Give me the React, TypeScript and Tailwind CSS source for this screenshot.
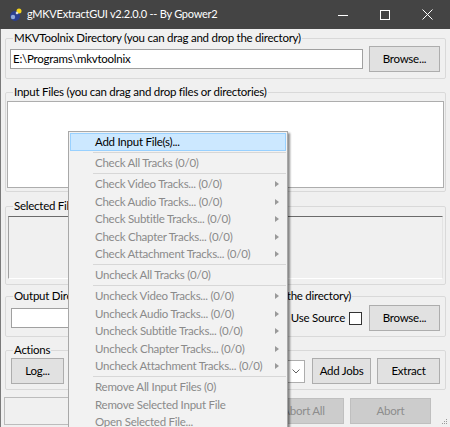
const font = { fontFamily: 'Lato, "Noto Sans", "Liberation Sans", sans-serif' };

type Item = { label: string; sub?: boolean; enabled?: boolean; hot?: boolean } | "sep";

const menu: Item[] = [
  { label: "Add Input File(s)...", enabled: true, hot: true },
  "sep",
  { label: "Check All Tracks (0/0)" },
  "sep",
  { label: "Check Video Tracks... (0/0)", sub: true },
  { label: "Check Audio Tracks... (0/0)", sub: true },
  { label: "Check Subtitle Tracks... (0/0)", sub: true },
  { label: "Check Chapter Tracks... (0/0)", sub: true },
  { label: "Check Attachment Tracks... (0/0)", sub: true },
  "sep",
  { label: "Uncheck All Tracks (0/0)" },
  "sep",
  { label: "Uncheck Video Tracks... (0/0)", sub: true },
  { label: "Uncheck Audio Tracks... (0/0)", sub: true },
  { label: "Uncheck Subtitle Tracks... (0/0)", sub: true },
  { label: "Uncheck Chapter Tracks... (0/0)", sub: true },
  { label: "Uncheck Attachment Tracks... (0/0)", sub: true },
  "sep",
  { label: "Remove All Input Files (0)" },
  { label: "Remove Selected Input File" },
  { label: "Open Selected File..." },
];

function Group({ label, className, children }: { label: string; className?: string; children?: React.ReactNode }) {
  return (
    <fieldset className={"mx-[4px] rounded-[2px] border border-[#d9d9d9] " + (className ?? "")}>
      <legend className="ml-[7px] px-[1px] text-[11.5px] leading-[14px] tracking-[-0.25px] text-black">{label}</legend>
      {children}
    </fieldset>
  );
}

function Button({ label, className }: { label: string; className?: string }) {
  return (
    <div
      className={
        "flex items-center justify-center border border-[#adadad] bg-[#e1e1e1] text-[11.5px] tracking-[-0.25px] text-black " +
        (className ?? "")
      }
    >
      {label}
    </div>
  );
}

function ContextMenu() {
  return (
    <div className="absolute left-[68px] top-[131px] w-[220px] border border-[#a8a8a8] bg-[#f2f2f2] py-[1px] shadow-[2px_2px_2px_rgba(0,0,0,0.45)]">
      {menu.map((item, i) =>
        item === "sep" ? (
          <div key={i} className="flex h-[3.5px] items-center pl-[24px] pr-[1px]">
            <div className="h-px w-full bg-[#d7d7d7]" />
          </div>
        ) : (
          <div
            key={i}
            className={
              "relative mx-[1px] flex h-[17.5px] items-center pl-[24px] text-[11.5px] tracking-[-0.25px] " +
              (item.hot ? "border border-[#99d1ff] bg-[#cce8ff] " : "border border-transparent ") +
              (item.enabled ? "text-black" : "text-[#8a8a8a]")
            }
          >
            {item.label}
            {item.sub && (
              <svg className="absolute right-[6px] top-[5px]" width="4" height="6" viewBox="0 0 4 6">
                <path d="M0 0L4 3L0 6Z" fill="#9a9a9a" />
              </svg>
            )}
          </div>
        )
      )}
    </div>
  );
}

export default function App() {
  return (
    <div className="relative h-[427px] w-[450px] overflow-hidden bg-[#f0f0f0]" style={font}>
      {/* title bar */}
      <div className="flex h-[29px] items-center bg-[#444444] text-white">
        <svg className="ml-[8px]" width="15" height="15" viewBox="0 0 15 15">
          <circle cx="7" cy="9" r="5" fill="#2b3e8f" />
          <circle cx="5" cy="10" r="2.2" fill="#8fa6d8" />
          <circle cx="11" cy="4" r="2.5" fill="#f3d21a" />
          <circle cx="9" cy="6" r="1.3" fill="#dadada" />
        </svg>
        <span className="ml-[4px] text-[11px] tracking-[-0.25px]">gMKVExtractGUI v2.2.0.0 -- By Gpower2</span>
        <div className="ml-auto flex h-full pr-[2px]">
          <div className="flex w-[42px] items-center justify-center">
            <svg width="10" height="10" viewBox="0 0 10 10">
              <path d="M0 5.5H10" stroke="#fff" strokeWidth="1" />
            </svg>
          </div>
          <div className="flex w-[42px] items-center justify-center">
            <svg width="10" height="10" viewBox="0 0 10 10">
              <rect x="0.5" y="0.5" width="9" height="9" fill="none" stroke="#fff" strokeWidth="1" />
            </svg>
          </div>
          <div className="flex w-[42px] items-center justify-center">
            <svg width="11" height="11" viewBox="0 0 11 11">
              <path d="M0.5 0.5L10.5 10.5M10.5 0.5L0.5 10.5" stroke="#fff" strokeWidth="1" />
            </svg>
          </div>
        </div>
      </div>

      <div className="flex flex-col border-b border-l border-[#7a7a7a]">
        <Group label="MKVToolnix Directory (you can drag and drop the directory)" className="mt-[2px] h-[48px]">
          <div className="flex items-center pl-[4px] pr-[5px] pt-[1px]">
            <div className="flex h-[20px] flex-1 items-center border border-[#a0a0a0] bg-white pl-[2px] text-[11.5px] tracking-[-0.25px]">
              E:\Programs\mkvtoolnix
            </div>
            <Button label="Browse..." className="ml-[6px] h-[26px] w-[71px]" />
          </div>
        </Group>

        <Group label="Input Files (you can drag and drop files or directories)" className="mt-[6px] h-[107px]">
          <div className="mx-[1px] mt-[2px] h-[87px] border border-[#adadad] bg-white" />
        </Group>

        <Group label="Selected File Information" className="mt-[7px] h-[86px]">
          <div className="mx-[2px] mt-[3px] h-[63px] border-b border-l border-r border-t border-b-white border-l-[#a0a0a0] border-r-[#e3e3e3] border-t-[#6b6b6b] bg-[#f0f0f0]" />
        </Group>

        <Group label="Output Directory (you can also simply just drag and drop the directory)" className="mt-[4px] h-[48px]">
          <div className="flex items-center pl-[5px] pr-[5px] pt-[2px]">
            <div className="h-[20px] flex-1 border border-[#a0a0a0] bg-white" />
            <span className="ml-[6px] text-[11.5px] tracking-[-0.25px]">Use Source</span>
            <div className="ml-[4px] h-[13px] w-[13px] border border-[#333] bg-white" />
            <Button label="Browse..." className="ml-[7px] h-[26px] w-[71px]" />
          </div>
        </Group>

        <Group label="Actions" className="mt-[6px] h-[47px]">
          <div className="flex items-center pl-[5px] pr-[5px] pt-[1px]">
            <Button label="Log..." className="h-[26px] w-[53px]" />
            <div className="flex-1" />
            <div className="flex h-[23px] w-[100px] items-center justify-end border border-[#adadad] bg-white pr-[4px]">
              <svg width="8" height="5" viewBox="0 0 8 5">
                <path d="M0.5 0.5L4 4L7.5 0.5" fill="none" stroke="#606060" strokeWidth="1" />
              </svg>
            </div>
            <Button label="Add Jobs" className="ml-[7px] h-[26px] w-[59px]" />
            <Button label="Extract" className="ml-[6px] h-[26px] w-[63px]" />
          </div>
        </Group>

        <div className="flex h-[37px] items-center pl-[3px] pr-[19px] pt-[4px]">
          <div className="h-[28px] flex-1 border border-[#bcbcbc] bg-[#f0f0f0]" />
          <div className="ml-[6px] flex h-[26px] w-[81px] items-center justify-center border border-[#bfbfbf] bg-[#cccccc] text-[11.5px] tracking-[-0.25px] text-[#8d8d8d]">
            Abort All
          </div>
          <div className="ml-[6px] flex h-[26px] w-[81px] items-center justify-center border border-[#bfbfbf] bg-[#cccccc] text-[11.5px] tracking-[-0.25px] text-[#8d8d8d]">
            Abort
          </div>
        </div>
      </div>

      <svg className="absolute bottom-[2px] right-[2px]" width="7" height="7" viewBox="0 0 7 7">
        <rect x="5" y="1" width="1" height="1" fill="#9a9a9a" />
        <rect x="3" y="3" width="1" height="1" fill="#9a9a9a" />
        <rect x="5" y="3" width="1" height="1" fill="#9a9a9a" />
        <rect x="1" y="5" width="1" height="1" fill="#9a9a9a" />
        <rect x="3" y="5" width="1" height="1" fill="#9a9a9a" />
        <rect x="5" y="5" width="1" height="1" fill="#9a9a9a" />
      </svg>

      <ContextMenu />
    </div>
  );
}
